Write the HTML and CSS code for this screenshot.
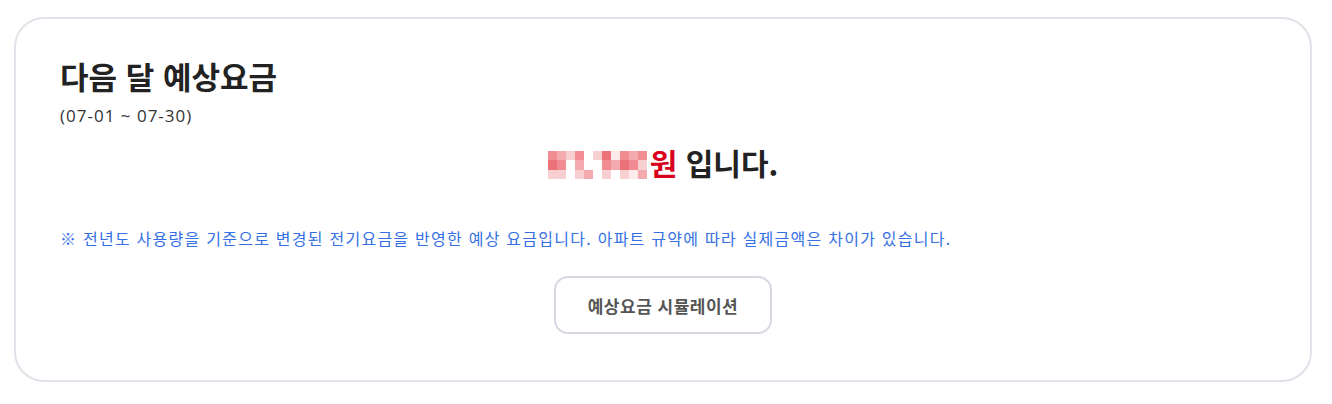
FILE: index.html
```html
<!DOCTYPE html>
<html lang="ko">

<head>
    <meta charset="UTF-8" />
    <title>다음 달 예상요금</title>
    <link rel="stylesheet" href="styles.css">
</head>

<body>
    <div class="card">
        <h2>다음 달 예상요금</h2>
        <p class="period">(07-01 ~ 07-30)</p>

        <div class="amount">
            <div class="mosaic">
                <i class="c2"></i><i class="c3"></i><i class="c4"></i><i class="c2"></i><i class="c0"></i><i class="c4"></i><i class="c1"></i><i class="c5"></i><i class="c2"></i><i class="c3"></i><i class="c2"></i>
                <i class="c1"></i><i class="c2"></i><i class="c0"></i><i class="c3"></i><i class="c0"></i><i class="c0"></i><i class="c2"></i><i class="c3"></i><i class="c1"></i><i class="c2"></i><i class="c4"></i>
                <i class="c4"></i><i class="c4"></i><i class="c0"></i><i class="c4"></i><i class="c3"></i><i class="c0"></i><i class="c4"></i><i class="c0"></i><i class="c4"></i><i class="c5"></i><i class="c3"></i>
            </div>
            <span class="won">원</span>
            <span>&nbsp;입니다.</span>
        </div>

        <p class="notice">※ 전년도 사용량을 기준으로 변경된 전기요금을 반영한 예상 요금입니다. 아파트 규약에 따라 실제금액은 차이가 있습니다.</p>

        <div class="actions">
            <button class="btn-sim">예상요금 시뮬레이션</button>
        </div>
    </div>
</body>

</html>
```

FILE: styles.css
```css
* {
    box-sizing: border-box;
    margin: 0;
    padding: 0;
    font-family: "Noto Sans CJK KR", sans-serif;
}

body {
    background-color: #fff;
    padding: 17px 20px 0 14px;
}

.card {
    width: 1298px;
    height: 365px;
    border: 2px solid #dfe2e8;
    border-radius: 30px;
    padding: 37px 44px 0 44px;
}

.card h2 {
    font-size: 31px;
    font-weight: 700;
    color: #222;
    line-height: 40px;
}

.period {
    font-family: "Open Sans", sans-serif;
    font-size: 17px;
    letter-spacing: 1px;
    color: #333;
    line-height: 20px;
    margin-top: 10px;
}

.amount {
    display: flex;
    align-items: center;
    justify-content: center;
    margin-top: 18px;
    font-size: 30px;
    font-weight: 700;
    color: #222;
    line-height: 36px;
    height: 36px;
}

.mosaic {
    display: grid;
    grid-template-columns: repeat(11, 9px);
    grid-auto-rows: 9.33px;
    margin: 6px 3px 0 0;
}

.mosaic i {
    display: block;
}

.c0 { background: #fff; }
.c1 { background: #ec7279; }
.c2 { background: #f08c92; }
.c3 { background: #f4aaae; }
.c4 { background: #f8cfd1; }
.c5 { background: #fcebea; }

.won {
    color: #d8001c;
}

.notice {
    margin-top: 47px;
    font-size: 16px;
    letter-spacing: 1.25px;
    color: #3470e3;
    line-height: 22px;
}

.actions {
    display: flex;
    justify-content: center;
    margin-top: 27px;
}

.btn-sim {
    width: 218px;
    height: 58px;
    background: #fff;
    border: 2px solid #d6d9e2;
    border-radius: 14px;
    font-size: 17px;
    letter-spacing: 0.5px;
    font-weight: 700;
    color: #555;
    cursor: pointer;
}
```
